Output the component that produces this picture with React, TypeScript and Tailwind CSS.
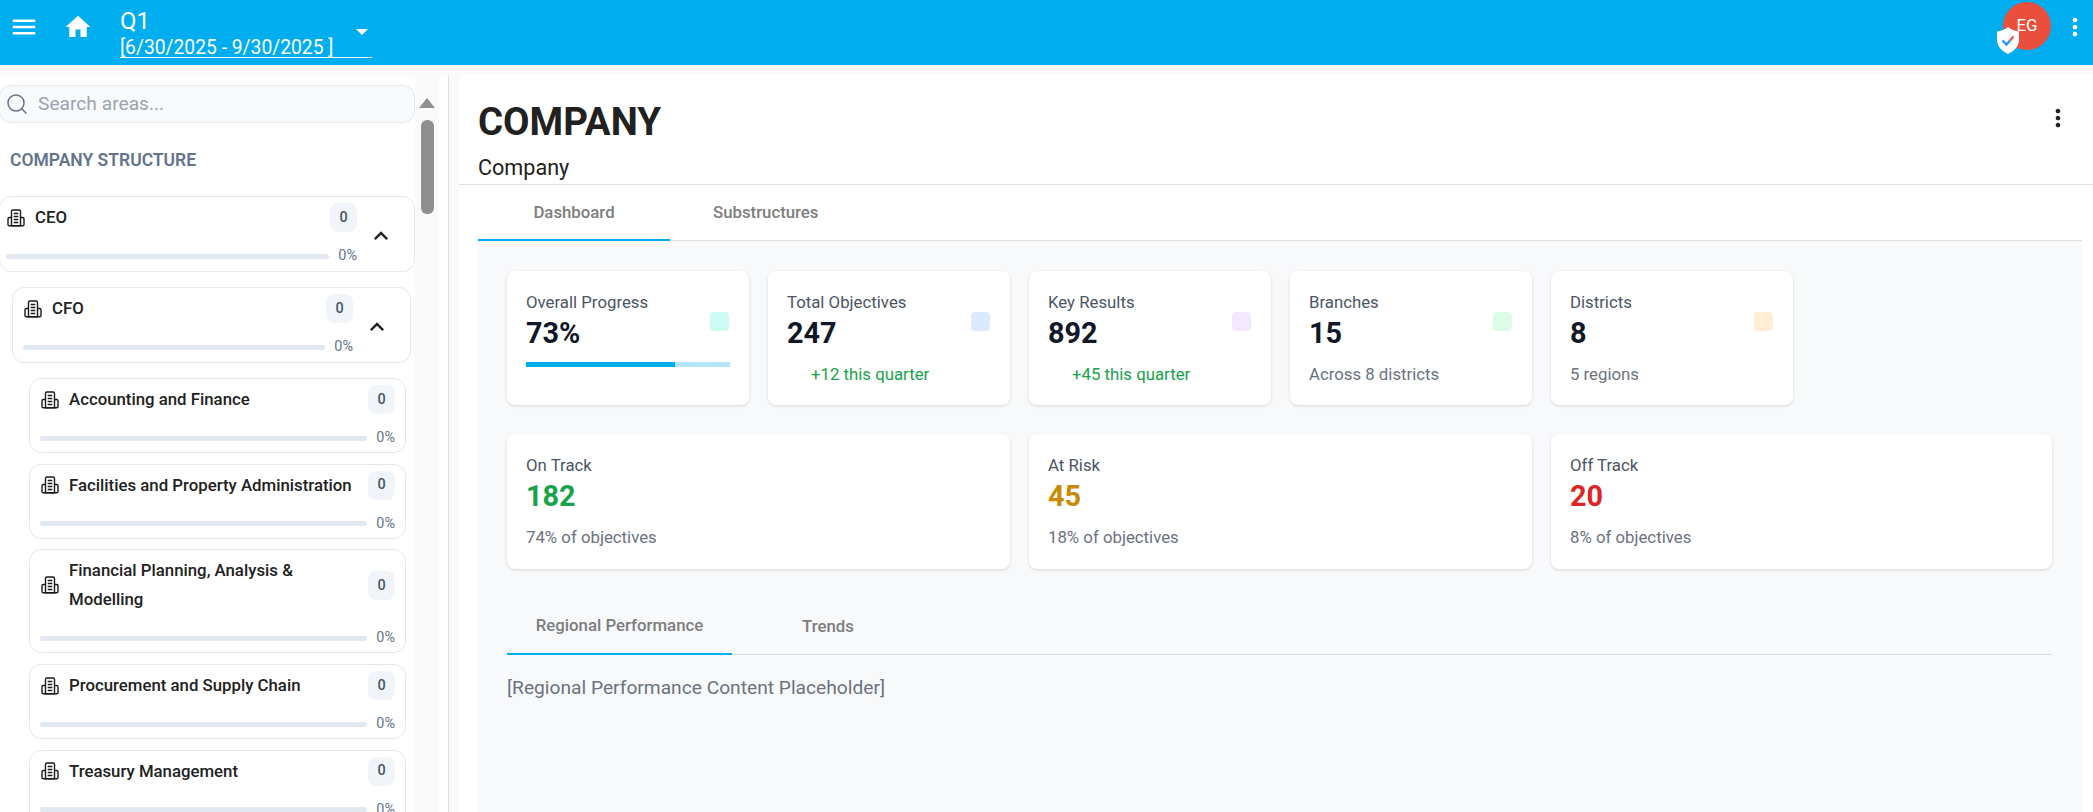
import type { ReactNode } from 'react';
import { Search } from 'lucide-react';

const font = "font-['Roboto',sans-serif]";

function MoreVert({ className = '' }: { className?: string }) {
  return (
    <svg width="28" height="28" viewBox="0 0 24 24" fill="currentColor" className={className}>
      <path d="M12 8c1.1 0 2-.9 2-2s-.9-2-2-2-2 .9-2 2 .9 2 2 2zm0 2c-1.1 0-2 .9-2 2s.9 2 2 2 2-.9 2-2-.9-2-2-2zm0 6c-1.1 0-2 .9-2 2s.9 2 2 2 2-.9 2-2-.9-2-2-2z" />
    </svg>
  );
}

function OfficeIcon() {
  return (
    <svg width="18" height="18" viewBox="0 0 18 18" fill="none" stroke="#1a1a1a" strokeWidth="1.4" className="shrink-0 ml-px">
      <path d="M4.5 16.8V2.4c0-.9.5-1.4 1.4-1.4h6.2c.9 0 1.4.5 1.4 1.4v14.4z" />
      <path d="M4.5 8.5H2.4c-.9 0-1.4.5-1.4 1.4v5.5c0 .9.5 1.4 1.4 1.4h13.2c.9 0 1.4-.5 1.4-1.4V9.9c0-.9-.5-1.4-1.4-1.4h-2.1" />
      <path d="M6.7 4.5h4.6M6.7 7.5h4.6M6.7 10.500h4.6M6.7 13.500h4.6" />
    </svg>
  );
}

function AreaCard({ name, expandable, flush }: { name: ReactNode; expandable?: boolean; flush?: boolean }) {
  return (
    <div className={`bg-white border border-[#e5e7eb] rounded-xl pt-[6px] flex ${flush ? 'pl-[6px]' : 'pl-[10px]'} ${expandable ? 'pr-[9px] pb-[5px]' : 'pr-[10px] pb-[4px]'}`}>
      <div className="flex-1 min-w-0">
        <div className="flex items-center min-h-[29px]">
          <OfficeIcon />
          <div className="flex-1 ml-[10px] text-[16.8px] leading-[29px] font-medium text-[#212121]">{name}</div>
          <span className="w-[27px] h-[29px] rounded-lg bg-[#f1f5f9] text-[#475569] text-[14.4px] font-medium flex items-center justify-center">0</span>
        </div>
        <div className="flex items-center mt-[14px]">
          <div className="flex-1 h-[5px] rounded-full bg-[#e2e8f0]" />
          <span className="w-[28px] text-right text-[14.4px] leading-[20px] text-[#64748b]">0%</span>
        </div>
      </div>
      {expandable && (
        <div className="w-[48px] shrink-0 flex items-center justify-center pt-[2px]">
          <svg width="28" height="28" viewBox="0 0 24 24" fill="#212121">
            <path d="M12 8l-6 6 1.41 1.41L12 10.83l4.59 4.58L18 14z" />
          </svg>
        </div>
      )}
    </div>
  );
}

function Sidebar() {
  return (
    <aside className="w-[449px] shrink-0 mt-[11px] border-r border-[#e0e0e0] flex bg-white pt-[9px] h-[736px] overflow-hidden">
      <div className="w-[416px] -ml-px shrink-0 flex flex-col">
        <div className="h-[38px] border border-[#e2e8f0] rounded-xl bg-[#f8fafc] flex items-center pl-[5px] shrink-0">
          <Search size={24} strokeWidth={1.5} className="text-[#64748b]" />
          <span className="ml-[9px] text-[19.2px] text-[#9ca3af]">Search areas...</span>
        </div>
        <div className="pl-[11px] mt-[25px] h-[24px] leading-[24px] text-[17.5px] font-semibold text-[#64748b] shrink-0">COMPANY STRUCTURE</div>
        <div className="mt-[24px] flex flex-col">
          <AreaCard name="CEO" expandable flush />
          <div className="pl-[13px] pr-[4px] mt-[15px]">
            <AreaCard name="CFO" expandable />
          </div>
          <div className="pl-[30px] pr-[9px] mt-[15px] flex flex-col gap-[10.7px]">
            <AreaCard name="Accounting and Finance" />
            <AreaCard name="Facilities and Property Administration" />
            <AreaCard name={<>Financial Planning, Analysis &<br />Modelling</>} />
            <AreaCard name="Procurement and Supply Chain" />
            <AreaCard name="Treasury Management" />
          </div>
        </div>
      </div>
      <div className="w-[24px] bg-[#fafafa] shrink-0 flex flex-col items-center -mt-[9px] pt-[22px]">
        <div className="w-0 h-0 border-x-[8px] border-x-transparent border-b-[10px] border-b-[#8f8f8f]" />
        <div className="w-[13px] h-[94px] rounded-md bg-[#8f8f8f] mt-[12px]" />
      </div>
    </aside>
  );
}

function StatCard({ label, value, valueColor = 'text-[#111827]', sub, subGreen, dot, children, className = '' }: { label: string; value: string; valueColor?: string; sub?: string; subGreen?: boolean; dot?: string; children?: ReactNode; className?: string }) {
  return (
    <div className={`relative bg-white rounded-lg shadow-[0_1px_3px_rgba(0,0,0,0.14)] px-[19px] pt-[21px] ${className}`}>
      <div className="text-[16.8px] leading-[20px] text-[#4b5563]">{label}</div>
      <div className={`text-[28.8px] leading-[36px] mt-[3px] font-bold ${valueColor}`}>{value}</div>
      {sub && <div className={`text-[16.8px] leading-[20px] mt-[13px] ${subGreen ? 'text-[#16a34a] pl-[24px]' : 'text-[#6b7280]'}`}>{sub}</div>}
      {children}
      {dot && <span className={`absolute right-[20px] top-[41px] w-[19px] h-[19px] rounded ${dot}`} />}
    </div>
  );
}

export default function App() {
  return (
    <div className={`${font} h-screen w-full overflow-hidden bg-[#fafafa] flex flex-col`}>
      <header className="h-[65px] bg-[#00adef] shrink-0 flex items-center text-white">
        <svg width="30" height="30" viewBox="0 0 24 24" fill="currentColor" className="ml-[9px] -mt-[11px]">
          <path d="M3 18h18v-2H3v2zm0-5h18v-2H3v2zm0-7v2h18V6H3z" />
        </svg>
        <svg width="30" height="30" viewBox="0 0 24 24" fill="currentColor" className="ml-[24px] -mt-[11px]">
          <path d="M10 20v-6h4v6h5v-8h3L12 3 2 12h3v8z" />
        </svg>
        <div className="ml-[27px] w-[252px] h-[56px] -mt-[5px] border-b border-white relative">
          <div className="text-[24px] leading-[32px] pt-[3px]">Q1</div>
          <div className="text-[19.3px] leading-[22px]">[6/30/2025 - 9/30/2025 ]</div>
          <span className="absolute right-[4px] top-[27px] w-0 h-0 border-x-[6px] border-x-transparent border-t-[6px] border-t-white" />
        </div>
        <div className="flex-1" />
        <div className="relative w-[48px] h-[48px] -mt-[13px] rounded-full bg-[#ea4f3d] flex items-center justify-center text-[16.8px] mr-[10px]">
          EG
          <svg className="absolute -left-[6px] top-[25px]" width="22" height="27" viewBox="0 0 22 27">
            <path d="M11 0c3 2.5 7 4 11 4.500V13c0 6.500-5 11-11 14C5 24 0 19.500 0 13V4.500C4 4 8 2.500 11 0z" fill="white" />
            <path d="M5.500 13.500l4 4 3.500-4" fill="none" stroke="#2196f3" strokeWidth="2.4" />
            <path d="M13 13.500l3.500-4" fill="none" stroke="#ef5350" strokeWidth="2.4" />
          </svg>
        </div>
        <MoreVert className="mr-[4px] -mt-[11px]" />
      </header>
      <div className="flex-1 min-h-0 flex">
        <Sidebar />
        <main className="flex-1 min-w-0 ml-[10px] mt-[9px] bg-white rounded-tl-lg overflow-hidden">
          <div className="relative h-[111px] border-b border-[#e0e0e0] pl-[19px] pt-[24px]">
            <h1 className="text-[38.4px] leading-[48px] font-bold text-[#212121]">COMPANY</h1>
            <div className="text-[21.6px] leading-[28px] mt-[8px] text-[#212121]">Company</div>
            <MoreVert className="absolute right-[21px] top-[30px] text-[#212121]" />
          </div>
          <div className="ml-[19px] mr-[11px] h-[56px] flex border-b border-[#e0e0e0]">
            <div className="w-[192px] h-[56px] border-b-2 border-[#00adef] text-center text-[16.8px] font-medium text-[#7d7d7d] leading-[54px]">Dashboard</div>
            <div className="ml-[43px] text-[16.8px] font-medium text-[#7d7d7d] leading-[54px]">Substructures</div>
          </div>
          <div className="ml-[19px] mr-[11px] h-[600px] bg-[#f8f9fb] pl-[29px] pr-[30px] pt-[30px]">
            <div className="flex gap-[19.4px]">
              <StatCard className="w-[241.6px] h-[134px]" label="Overall Progress" value="73%" dot="bg-[#ccfbf1]">
                <div className="mt-[11px] h-[5px] bg-[#b3e5fc]"><div className="h-full w-[73%] bg-[#00adef]" /></div>
              </StatCard>
              <StatCard className="w-[241.6px] h-[134px]" label="Total Objectives" value="247" sub="+12 this quarter" subGreen dot="bg-[#dbeafe]" />
              <StatCard className="w-[241.6px] h-[134px]" label="Key Results" value="892" sub="+45 this quarter" subGreen dot="bg-[#f3e8ff]" />
              <StatCard className="w-[241.6px] h-[134px]" label="Branches" value="15" sub="Across 8 districts" dot="bg-[#dcfce7]" />
              <StatCard className="w-[241.6px] h-[134px]" label="Districts" value="8" sub="5 regions" dot="bg-[#ffedd5]" />
            </div>
            <div className="flex gap-[19px] mt-[29px]">
              <StatCard className="w-[503px] h-[135px]" label="On Track" value="182" valueColor="text-[#16a34a]" sub="74% of objectives" />
              <StatCard className="w-[503px] h-[135px]" label="At Risk" value="45" valueColor="text-[#ca8a04]" sub="18% of objectives" />
              <StatCard className="flex-1 h-[135px]" label="Off Track" value="20" valueColor="text-[#dc2626]" sub="8% of objectives" />
            </div>
            <div className="mt-[28px] h-[58px] flex border-b border-[#d9dbe0]">
              <div className="w-[225px] h-[58px] border-b-2 border-[#00adef] text-center text-[16.8px] font-medium text-[#7d7d7d] leading-[56px]">Regional Performance</div>
              <div className="ml-[70px] text-[16.8px] font-medium text-[#7d7d7d] leading-[58px]">Trends</div>
            </div>
            <div className="mt-[20px] text-[19.2px] leading-[26px] text-[#6b7280]">[Regional Performance Content Placeholder]</div>
          </div>
        </main>
      </div>
    </div>
  );
}
